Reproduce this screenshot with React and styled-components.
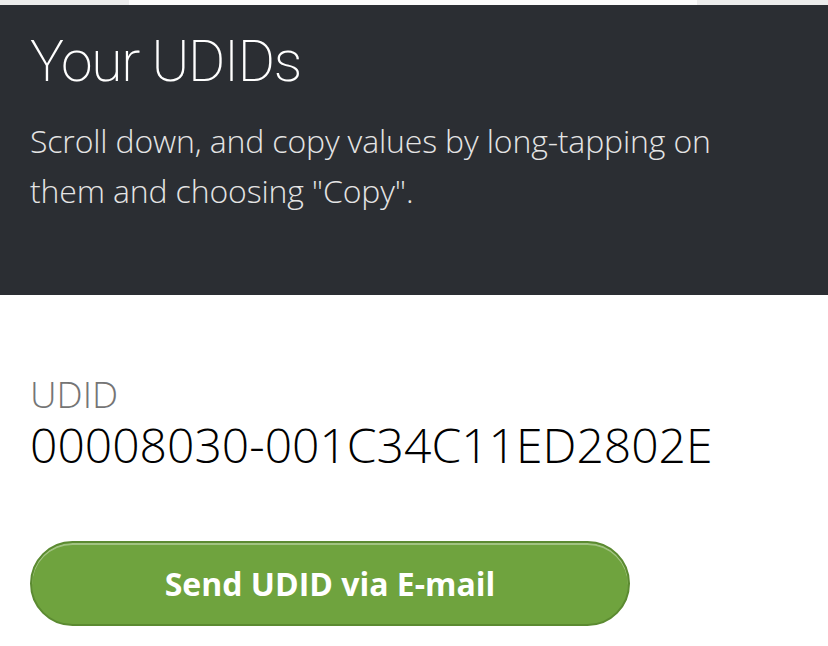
import React from 'react';
import styled, { createGlobalStyle } from 'styled-components';

const GlobalStyle = createGlobalStyle`
    html, body {
        margin: 0;
        padding: 0;
        background: #ffffff;
        font-family: "Open Sans", "Liberation Sans", sans-serif;
    }
`;

const TopStrip = styled.div`
    height: 5px;
    background: #ececec;
    display: flex;
    justify-content: center;
`;

const StripTab = styled.div`
    width: 568px;
    margin-left: -2px;
    background: #fbfbfb;
`;

const Header = styled.header`
    height: 290px;
    box-sizing: border-box;
    background: #2b2e33;
    padding: 24px 30px 0;
`;

const Title = styled.h1`
    margin: 0;
    font-family: Roboto, "Liberation Sans", sans-serif;
    font-weight: 200;
    font-size: 57px;
    line-height: 66px;
    letter-spacing: -1.3px;
    color: #ffffff;
`;

const Lead = styled.p`
    margin: 21px 0 0;
    font-weight: 300;
    font-size: 32px;
    line-height: 50px;
    letter-spacing: -0.15px;
    color: #e4e4e4;
`;

const Content = styled.main`
    padding: 74px 30px 0;
`;

const Label = styled.div`
    font-weight: 300;
    font-size: 37px;
    line-height: 50px;
    color: #757575;
`;

const Value = styled.div`
    margin-top: -2px;
    font-weight: 300;
    font-size: 48px;
    line-height: 56px;
    color: #000000;
`;

const SendButton = styled.button`
    display: block;
    margin-top: 68px;
    width: 600px;
    height: 85px;
    border-radius: 43px;
    border: 2px solid #5b8a31;
    background: #6fa33e;
    box-shadow: inset 0 2px 0 rgba(255, 255, 255, 0.35);
    font-family: "Open Sans", "Liberation Sans", sans-serif;
    font-weight: 700;
    font-size: 32px;
    color: #ffffff;
    cursor: pointer;
`;

export default function App() {
    return (
        <>
            <GlobalStyle />
            <TopStrip>
                <StripTab />
            </TopStrip>
            <Header>
                <Title>Your UDIDs</Title>
                <Lead>
                    Scroll down, and copy values by long-tapping on<br />
                    them and choosing "Copy".
                </Lead>
            </Header>
            <Content>
                <Label>UDID</Label>
                <Value>00008030-001C34C11ED2802E</Value>
                <SendButton>Send UDID via E-mail</SendButton>
            </Content>
        </>
    );
}
